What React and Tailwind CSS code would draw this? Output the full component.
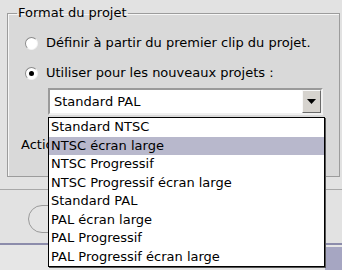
import React from 'react'

const items = [
  'Standard NTSC',
  'NTSC écran large',
  'NTSC Progressif',
  'NTSC Progressif écran large',
  'Standard PAL',
  'PAL écran large',
  'PAL Progressif',
  'PAL Progressif écran large',
]

function Radio({ checked }) {
  return (
    <span className="flex h-[13px] w-[13px] shrink-0 items-center justify-center rounded-full border border-[#8a8a8a] border-b-[#f4f4f4] border-r-[#f4f4f4] bg-white">
      {checked && <span className="h-[5px] w-[5px] rounded-full bg-black" />}
    </span>
  )
}

export default function App() {
  return (
    <div
      className="relative h-[270px] w-[342px] overflow-hidden bg-[#e2e2e2] text-[13px] leading-[16px] text-black"
      style={{ fontFamily: '"DejaVu Sans", Verdana, sans-serif' }}
    >
      <div className="pl-[7px] pr-[2px] pt-[5px]">
        <fieldset className="h-[172px] border border-[#9c9c9c] bg-[#d9d9d9] shadow-[inset_1px_1px_0_#f6f6f6]">
          <legend className="ml-[9px] px-[1px]">Format du projet</legend>
          <div className="flex flex-col pl-[17px] pt-[14px]">
            <label className="flex h-[16px] items-center gap-[8px]">
              <Radio />
              <span>Définir à partir du premier clip du projet.</span>
            </label>
            <label className="mt-[14px] flex h-[16px] items-center gap-[8px]">
              <Radio checked />
              <span>Utiliser pour les nouveaux projets :</span>
            </label>
            <div className="ml-[23px] mt-[7px] flex h-[27px] w-[275px] items-center border-2 border-[#9a9a9a] border-b-[#f0f0f0] border-r-[#f0f0f0] bg-white pl-[4px]">
              <span className="flex-1">Standard PAL</span>
              <span className="flex h-[23px] w-[19px] items-center justify-center border border-[#f8f8f8] border-b-[#6a6a6a] border-r-[#6a6a6a] bg-[#d6d3ce]">
                <svg width="9" height="5" viewBox="0 0 9 5">
                  <path d="M0 0h9L4.5 5z" fill="#000" />
                </svg>
              </span>
            </div>
            <div className="-ml-[4px] mt-[22px]">Action</div>
          </div>
        </fieldset>
      </div>
      <div className="mt-[12px] h-[2px] border-t border-[#a8a8a8] border-b-white" />
      <div className="h-[52px] pl-[28px] pt-[14px]">
        <div className="h-[28px] w-[110px] rounded-full border border-[#9a9a9a] bg-[#e4e4e4]" />
      </div>
      <div className="flex h-[30px] border-t-2 border-[#8c8cab] bg-[#e6e6e6]">
        <div className="flex-1" />
        <div className="mt-[2px] w-[17px] bg-[#a6a6c2]" />
      </div>

      <ul className="absolute left-[48px] top-[117px] w-[277px] border border-black bg-white shadow-[1px_1px_0_#555]">
        {items.map((t, i) => (
          <li
            key={t}
            className={
              i === 1
                ? 'flex h-[18.5px] items-center bg-[#b8b8cc] pl-[2px]'
                : 'flex h-[18.5px] items-center pl-[2px]'
            }
          >
            {t}
          </li>
        ))}
      </ul>
    </div>
  )
}
